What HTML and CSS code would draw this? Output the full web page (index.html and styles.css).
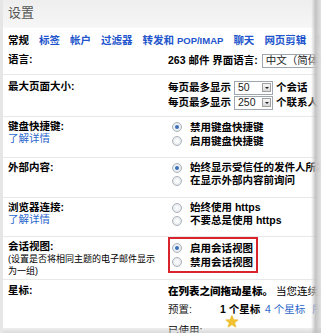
FILE: index.html
```html
<!DOCTYPE html>
<html lang="zh-CN">
<head>
    <meta charset="UTF-8">
    <title>设置</title>
    <link rel="stylesheet" href="styles.css">
</head>
<body>
    <div class="window">
        <div class="title">设置</div>
        <div class="tabs">
            <span class="tab active">常规</span>
            <span class="tab">标签</span>
            <span class="tab">帐户</span>
            <span class="tab">过滤器</span>
            <span class="tab">转发和 <small>POP/IMAP</small></span>
            <span class="tab">聊天</span>
            <span class="tab">网页剪辑</span>
            <span class="tab">实验室</span>
        </div>

        <div class="row row-lang">
            <div class="label">语言:</div>
            <div class="value">
                <div class="line">263 邮件 界面语言: <span class="select lang">中文（简体）</span></div>
            </div>
        </div>

        <div class="row row-size">
            <div class="label">最大页面大小:</div>
            <div class="value">
                <div class="line">每页最多显示 <span class="select num">50<i class="arrow"></i></span> 个会话</div>
                <div class="line">每页最多显示 <span class="select num">250<i class="arrow"></i></span> 个联系人</div>
            </div>
        </div>

        <div class="row row-keys">
            <div class="label">键盘快捷键:<a class="more">了解详情</a></div>
            <div class="value">
                <div class="opt"><span class="radio on"></span>禁用键盘快捷键</div>
                <div class="opt"><span class="radio"></span>启用键盘快捷键</div>
            </div>
        </div>

        <div class="row row-ext">
            <div class="label">外部内容:</div>
            <div class="value">
                <div class="opt"><span class="radio on"></span>始终显示受信任的发件人所发送的外部内容</div>
                <div class="opt"><span class="radio"></span>在显示外部内容前询问</div>
            </div>
        </div>

        <div class="row row-https">
            <div class="label">浏览器连接:<a class="more">了解详情</a></div>
            <div class="value">
                <div class="opt"><span class="radio"></span>始终使用 https</div>
                <div class="opt"><span class="radio"></span>不要总是使用 https</div>
            </div>
        </div>

        <div class="row row-conv">
            <div class="label">会话视图:<span class="note">(设置是否将相同主题的电子邮件显示为一组)</span></div>
            <div class="value">
                <div class="marked">
                    <div class="opt"><span class="radio on"></span>启用会话视图</div>
                    <div class="opt"><span class="radio"></span>禁用会话视图</div>
                </div>
            </div>
        </div>

        <div class="row row-star">
            <div class="label">星标:</div>
            <div class="value">
                <div class="line"><b>在列表之间拖动星标。</b><span>当您连续点击星标时，星标会按以下顺序轮换显示。</span></div>
                <div class="presets">
                    <span class="pre-label">预置:</span>
                    <span class="pre-one">1 个星标</span>
                    <a class="pre-link">4 个星标</a>
                    <a class="pre-link">所有星标</a>
                </div>
                <div class="star-line">★</div>
                <div class="line used">已使用:</div>
            </div>
        </div>
    </div>
</body>
</html>
```

FILE: styles.css
```css
body {
    margin: 0; padding: 0;
    background: #fff;
    font-family: "Liberation Sans", "Noto Sans CJK SC", sans-serif;
    font-size: 10.5px; color: #000;
    overflow: hidden;
}
.window {
    position: relative;
    width: 321px; height: 333px;
    overflow: hidden;
    border-left: 3px solid #e6e6e6;
    box-sizing: border-box;
    background: #fff;
}
.window::after {
    content: ""; position: absolute;
    top: 0; right: 0; bottom: 0; width: 10px;
    background: linear-gradient(to right, rgba(255,255,255,0.2), rgba(190,190,190,0.9) 45%, rgba(225,225,225,1));
}
.window::before {
    content: ""; position: absolute;
    left: 0; right: 0; bottom: 0; height: 5px; z-index: 1;
    background: linear-gradient(to bottom, rgba(200,200,200,0.3), rgba(190,190,190,0.55));
}
.title {
    height: 28px; line-height: 26px;
    padding-left: 5px;
    font-size: 13px; color: #555;
    background: linear-gradient(#eeeeee, #f6f6f6);
    border-bottom: 1px solid #f9f9f9;
    box-sizing: border-box;
}
.tabs {
    display: flex; gap: 10px;
    padding: 5px 0 0 5px;
    height: 14px;
    white-space: nowrap;
    font-weight: bold;
    line-height: 14px;
}
.tab { color: #2255cc; flex: none; }
.tab small { font-size: 9.5px; }
.tab.active { color: #000; }

.row {
    display: flex;
    border-bottom: 1px solid #e8e8e8;
    box-sizing: border-box;
    padding-top: 3px;
    white-space: nowrap;
}
.row-lang { height: 28px; padding-top: 6px; }
.row-size { height: 42px; padding-top: 5px; }
.row-keys { height: 41px; }
.row-ext { height: 40px; }
.row-https { height: 39px; }
.row-conv { height: 43px; padding-top: 0; }
.row-conv .label { padding-top: 3px; }
.row-star { height: 60px; padding-top: 4px; border-bottom: none; }

.label {
    width: 160px; flex: none;
    padding-left: 5px;
    font-weight: bold;
    line-height: 12px;
    display: flex; flex-direction: column;
}
.more { color: #2a66cc; font-weight: normal; text-decoration: none; }
.note {
    font-weight: normal; font-size: 9px; line-height: 12px;
    white-space: normal; width: 150px;
    margin-top: 1px;
}
.value { flex: 1; font-weight: bold; min-width: 0; }
.line { line-height: 15px; height: 15px; display: flex; align-items: center; gap: 3px; }
.line > * { flex: none; }
.row-star .line span { font-weight: normal; }
.line.used { font-weight: normal; height: 12px; line-height: 12px; }

.select {
    display: inline-flex; align-items: center; justify-content: space-between;
    border: 1px solid #9ea6b0; background: #fff;
    height: 12px; box-sizing: content-box;
    font-weight: normal; font-size: 10.5px;
    color: #222;
    padding: 0 1px 0 3px;
}
.select.lang { width: 80px; margin-left: 1px; }
.select.num { width: 33px; }
.arrow {
    width: 9px; height: 9px;
    border: 1px solid #a0a0a0;
    background: linear-gradient(#f8f8f8, #d8d8d8);
    position: relative; box-sizing: border-box;
}
.arrow::after {
    content: ""; position: absolute; left: 2px; top: 3px;
    border-left: 2px solid transparent; border-right: 2px solid transparent;
    border-top: 2px solid #222;
}

.opt {
    display: flex; align-items: center;
    height: 13px; line-height: 13px;
    padding-left: 4px;
}
.row-keys .opt, .marked .opt { height: 14px; }
.radio {
    width: 8px; height: 8px; flex: none;
    border: 1px solid #a9b1ba; border-radius: 50%;
    background: radial-gradient(#ffffff, #dde1e6);
    margin-right: 8px;
    position: relative;
}
.radio.on::after {
    content: ""; position: absolute; left: 2px; top: 2px;
    width: 4px; height: 4px; border-radius: 50%;
    background: #3b6fb8;
}
.marked {
    width: 90px; height: 36px;
    border: 2px solid #d8252b;
    box-sizing: border-box;
    display: flex; flex-direction: column; justify-content: center;
}
.marked .opt { padding-left: 2px; }

.presets { display: flex; height: 16px; align-items: center; margin-top: 1px; font-weight: normal; }
.presets > * { flex: none; }
.pre-label { width: 52px; color: #222; }
.pre-one { font-weight: bold; width: 45px; }
.pre-link { color: #2a66cc; margin-right: 7px; }
.star-line {
    padding-left: 57px;
    height: 8px;
    color: #f2c230; font-size: 14px; line-height: 10px;
    text-shadow: 0 0 1px #d49c00;
}
```
